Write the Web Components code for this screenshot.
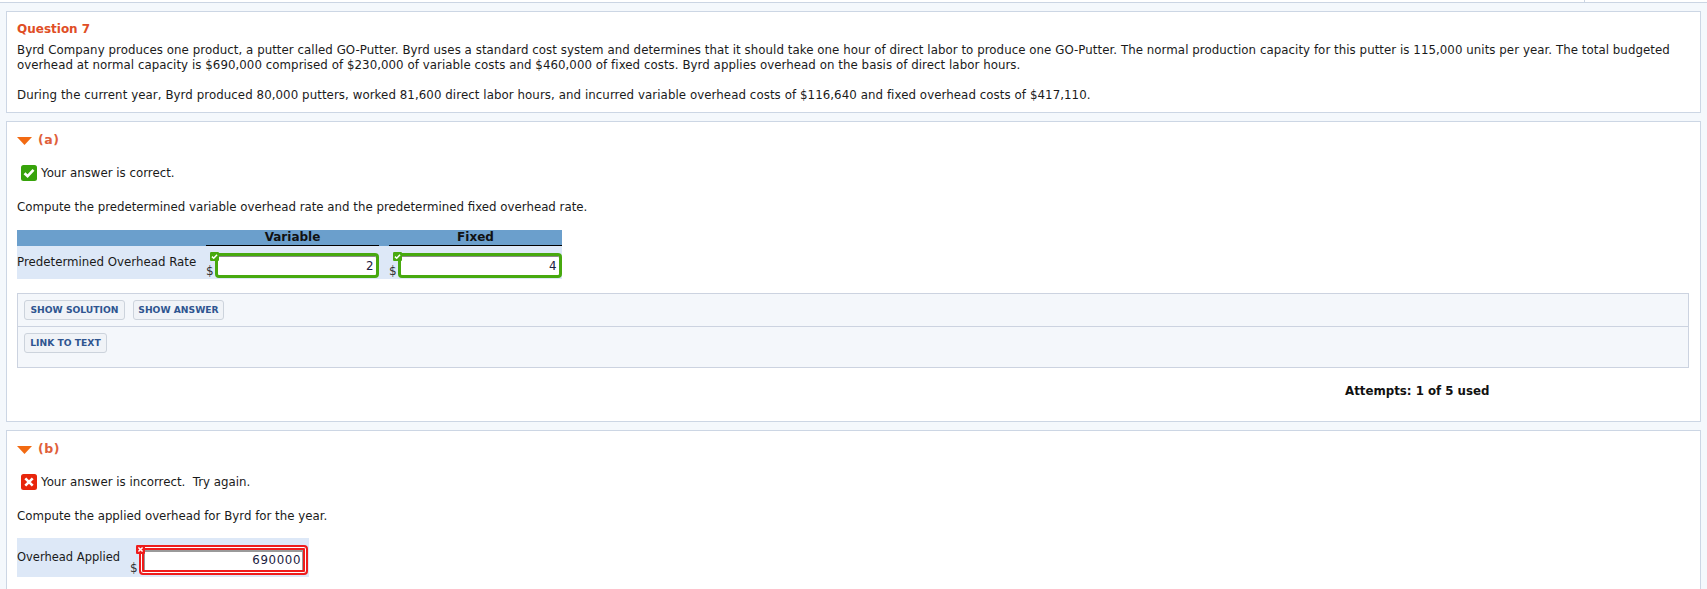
<!doctype html>
<html>
<head>
<meta charset="utf-8">
<title>Question 7</title>
<style>
	html, body { margin: 0; padding: 0; background: #f4f8fc; }
	body {
		height: 589px;
		overflow: hidden;
		font-family: "DejaVu Sans", Verdana, sans-serif;
		font-size: 11.8px;
		color: #1a1a1a;
	}
</style>
</head>
<body>

<top-rule></top-rule>

<question-card style="height: 100px; margin-bottom: 8px">
	<div style="color: #e04e26; font-weight: bold; font-size: 12px; line-height: 16px; margin: 9px 0 6px">Question 7</div>
	<div style="line-height: 15px; letter-spacing: 0.05px">Byrd Company produces one product, a putter called GO-Putter. Byrd uses a standard cost system and determines that it should take one hour of direct labor to produce one GO-Putter. The normal production capacity for this putter is 115,000 units per year. The total budgeted overhead at normal capacity is $690,000 comprised of $230,000 of variable costs and $460,000 of fixed costs. Byrd applies overhead on the basis of direct labor hours.</div>
	<div style="line-height: 15px; letter-spacing: 0.07px; margin-top: 15px">During the current year, Byrd produced 80,000 putters, worked 81,600 direct labor hours, and incurred variable overhead costs of $116,640 and fixed overhead costs of $417,110.</div>
</question-card>

<question-card style="height: 299px; margin-bottom: 8px">
	<part-heading>(a)</part-heading>
	<answer-status kind="correct">Your answer is correct.</answer-status>
	<div style="line-height: 15px; margin-top: 19px">Compute the predetermined variable overhead rate and the predetermined fixed overhead rate.</div>
	<rate-table></rate-table>
	<action-panel></action-panel>
	<div style="margin: 15px 0 0 1328px; font-weight: bold; line-height: 16px; color: #111">Attempts: 1 of 5 used</div>
</question-card>

<question-card style="height: 160px">
	<part-heading>(b)</part-heading>
	<answer-status kind="incorrect">Your answer is incorrect.&nbsp; Try again.</answer-status>
	<div style="line-height: 15px; margin-top: 19px">Compute the applied overhead for Byrd for the year.</div>
	<applied-row></applied-row>
</question-card>

<script>
const CHECK = '<path d="M3.5 8.2 6.6 11.2 12.5 4.8" fill="none" stroke="#fff" stroke-width="2.6"/>';
const CROSS = '<path d="M4.3 4.3 11.7 11.7M11.7 4.3 4.3 11.7" fill="none" stroke="#fff" stroke-width="2.6"/>';

class TopRule extends HTMLElement {
	constructor() {
		super();
		this.attachShadow({mode: 'open'}).innerHTML = `
			<style>
				:host { display: block; height: 11px; box-sizing: border-box; position: relative; }
				.line { height: 2px; background: #fff; border-bottom: 1px solid #cbd5e3; }
				.tick { position: absolute; left: 1584px; top: 0; width: 1px; height: 2px; background: #cbd5e3; }
			</style>
			<div class="line"></div><div class="tick"></div>`;
	}
}
customElements.define('top-rule', TopRule);

class QuestionCard extends HTMLElement {
	constructor() {
		super();
		this.attachShadow({mode: 'open'}).innerHTML = `
			<style>
				:host {
					display: block;
					margin: 0 6px;
					width: 1667px;
					padding: 0 16px 0 10px;
					background: #fff;
					border: 1px solid #ccd6e4;
				}
			</style>
			<slot></slot>`;
	}
}
customElements.define('question-card', QuestionCard);

class PartHeading extends HTMLElement {
	constructor() {
		super();
		this.attachShadow({mode: 'open'}).innerHTML = `
			<style>
				:host { display: flex; align-items: center; gap: 6px; height: 16px; margin-top: 9px;
					color: #e0603a; font-weight: bold; font-size: 12.5px; letter-spacing: 0.6px; }
				svg { width: 15px; height: 8px; display: block; margin-top: 3px; }
			</style>
			<svg viewBox="0 0 15 8"><path d="M0 0H15L7.5 8Z" fill="#f26a12"/></svg>
			<slot></slot>`;
	}
}
customElements.define('part-heading', PartHeading);

class AnswerStatus extends HTMLElement {
	constructor() {
		super();
		const ok = this.getAttribute('kind') === 'correct';
		this.attachShadow({mode: 'open'}).innerHTML = `
			<style>
				:host { display: flex; align-items: center; gap: 4px; height: 16px; margin: 18px 0 0 4px; line-height: 16px; }
				svg { width: 16px; height: 16px; flex: none; display: block; }
			</style>
			<svg viewBox="0 0 16 16"><rect width="16" height="16" rx="2.5" fill="${ok ? '#37a30b' : '#e8260c'}"/>${ok ? CHECK : CROSS}</svg>
			<span><slot></slot></span>`;
	}
}
customElements.define('answer-status', AnswerStatus);

class AnswerField extends HTMLElement {
	constructor() {
		super();
		const ok = this.getAttribute('kind') !== 'incorrect';
		const w = this.getAttribute('width');
		const ring = ok
			? 'border: 3px solid #47a90f; box-shadow: inset 0 1px 0 #8a8a8a;'
			: 'border: 2px solid #ee1c1c; box-shadow: inset 0 0 0 1px #fff, inset 0 0 0 3px #ee1c1c, inset 0 1px 0 4px #9a9a9a;';
		this.attachShadow({mode: 'open'}).innerHTML = `
			<style>
				:host { display: flex; align-items: flex-end; position: relative; height: ${ok ? 26 : 30}px; }
				.dollar { width: 9px; color: #333; line-height: 14px; font-size: 12px; }
				.box {
					box-sizing: border-box;
					width: ${w}px;
					height: ${ok ? 25 : 30}px;
					background: #fff;
					${ring}
					border-radius: 4px;
					text-align: right;
					padding: ${ok ? '3px 2px' : '6px 5px'} 0 0;
					line-height: 15px;
					letter-spacing: 0.6px;
					color: #1a2040;
				}
				.badge { position: absolute; left: ${ok ? 4 : 6}px; top: 0; width: 9px; height: 9px; display: block; }
			</style>
			<span class="dollar">$</span>
			<div class="box">${this.getAttribute('value')}</div>
			<svg class="badge" viewBox="0 0 16 16"><rect width="16" height="16" rx="2" fill="${ok ? '#47a90f' : '#ee1c1c'}"/>${ok ? CHECK : CROSS}</svg>`;
	}
}
customElements.define('answer-field', AnswerField);

class RateTable extends HTMLElement {
	constructor() {
		super();
		this.attachShadow({mode: 'open'}).innerHTML = `
			<style>
				:host { display: block; width: 545px; margin-top: 15px; }
				.head, .row { display: grid; grid-template-columns: 179px 173px 173px; column-gap: 10px; }
				.head { height: 16px; background: #6b9fcc; }
				.head span { font-weight: bold; font-size: 12px; text-align: center; line-height: 14px; height: 15px; border-bottom: 1px solid #000; color: #111; }
				.row { height: 33px; background: #dde8f7; align-items: start; }
				.label { line-height: 15px; margin-top: 9px; white-space: nowrap; }
				answer-field { margin-top: 6px; }
			</style>
			<div class="head"><i></i><span>Variable</span><span>Fixed</span></div>
			<div class="row">
				<div class="label">Predetermined Overhead Rate</div>
				<answer-field width="164" value="2"></answer-field>
				<answer-field width="164" value="4"></answer-field>
			</div>`;
	}
}
customElements.define('rate-table', RateTable);

class PanelButton extends HTMLElement {
	constructor() {
		super();
		this.attachShadow({mode: 'open'}).innerHTML = `
			<style>
				:host {
					display: inline-block; box-sizing: border-box; height: 20px; line-height: 18px;
					width: ${this.getAttribute('width')}px; text-align: center;
					background: #f0f3f7; border: 1px solid #ccd3dc; border-radius: 3px;
					color: #2f5590; font-weight: bold; font-size: 9.2px; white-space: nowrap;
				}
			</style>
			<slot></slot>`;
	}
}
customElements.define('panel-button', PanelButton);

class ActionPanel extends HTMLElement {
	constructor() {
		super();
		this.attachShadow({mode: 'open'}).innerHTML = `
			<style>
				:host { display: block; width: 1672px; box-sizing: border-box; margin-top: 14px; height: 75px;
					background: #f4f7fb; border: 1px solid #ccd3e0; }
				.row { display: flex; gap: 8px; padding: 6px 6px 0; }
				.first { height: 26px; border-bottom: 1px solid #ccd3e0; }
			</style>
			<div class="row first"><panel-button width="101">SHOW SOLUTION</panel-button><panel-button width="91">SHOW ANSWER</panel-button></div>
			<div class="row"><panel-button width="83">LINK TO TEXT</panel-button></div>`;
	}
}
customElements.define('action-panel', ActionPanel);

class AppliedRow extends HTMLElement {
	constructor() {
		super();
		this.attachShadow({mode: 'open'}).innerHTML = `
			<style>
				:host { display: flex; justify-content: space-between; align-items: flex-start; width: 292px; height: 39px; background: #dde8f7; margin-top: 14px; }
				.label { line-height: 15px; margin-top: 12px; font-size: 11.5px; }
				answer-field { margin-top: 7px; margin-right: 1px; }
			</style>
			<div class="label">Overhead Applied</div>
			<answer-field kind="incorrect" width="169" value="690000"></answer-field>`;
	}
}
customElements.define('applied-row', AppliedRow);
</script>
</body>
</html>
